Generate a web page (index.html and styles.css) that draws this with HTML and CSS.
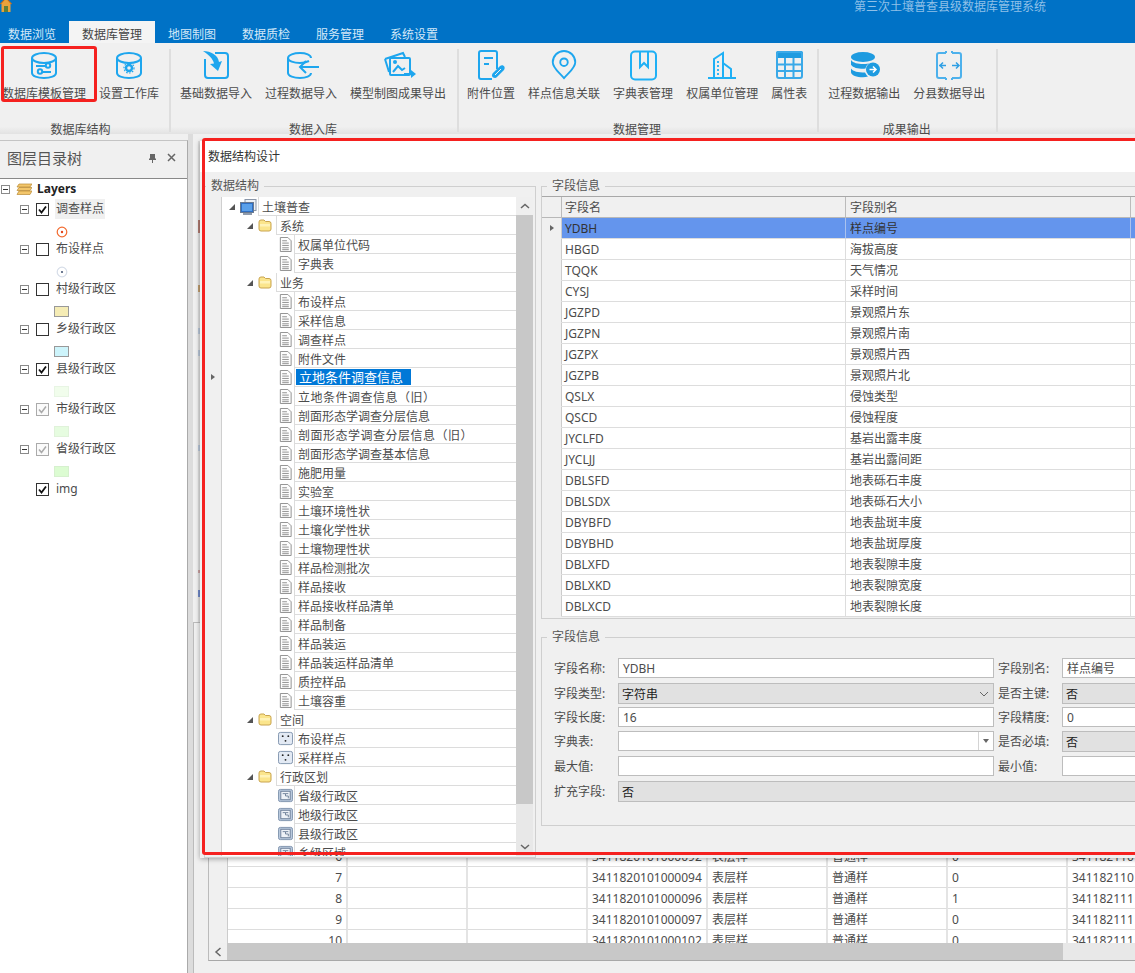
FILE: index.html
```html
<!DOCTYPE html>
<html lang="zh-CN">
<head>
<meta charset="utf-8">
<title>第三次土壤普查县级数据库管理系统</title>
<link rel="stylesheet" href="styles.css">
</head>
<body>
<svg class="defs" width="0" height="0" aria-hidden="true">
  <defs>
    <symbol id="doc" viewBox="0 0 14 16">
      <path d="M1.5.5h8l3.5 3.5v11.500h-11.500z" fill="#fdfdfd" stroke="#8c8c8c"/>
      <path d="M3.500 4h5M3.500 6.500h7M3.500 9h7M3.500 11.500h7M3.500 13.500h7" stroke="#8c8c8c" fill="none"/>
    </symbol>
    <symbol id="folder" viewBox="0 0 14 13">
      <path d="M1 3q0-2 2-2h3l1.500 1.500H11q2 0 2 2V10q0 2-2 2H3q-2 0-2-2z" fill="#fbe58c" stroke="#c9a44e"/>
      <path d="M2 5h10v2.500H2z" fill="#fff3b8"/>
    </symbol>
    <symbol id="exp" viewBox="0 0 6 6"><path d="M6 0v6H0z" fill="#555"/></symbol>
    <symbol id="pt" viewBox="0 0 16 14">
      <rect x=".5" y=".5" width="15" height="13" rx="2" fill="#e3eaf4" stroke="#7f93ad"/>
      <circle cx="5" cy="4.500" r="1" fill="#222"/><circle cx="11" cy="4.500" r="1" fill="#222"/><circle cx="8" cy="9.500" r="1" fill="#222"/>
    </symbol>
    <symbol id="poly" viewBox="0 0 16 14">
      <rect x=".5" y=".5" width="15" height="13" rx="2" fill="#b9c9dd" stroke="#7f93ad"/>
      <rect x="3" y="2.500" width="10" height="9" fill="#eef2f7" stroke="#6d7f98"/>
      <path d="M5 5h3v2.500h3V10M8 5l3 0" fill="none" stroke="#6d7f98"/>
    </symbol>
    <symbol id="check" viewBox="0 0 13 13">
      <rect x=".5" y=".5" width="12" height="12" fill="#fff" stroke="#333"/>
      <path d="M3 6.500l2.500 3L10 3.500" fill="none" stroke="#111" stroke-width="1.800"/>
    </symbol>
    <symbol id="uncheck" viewBox="0 0 13 13"><rect x=".5" y=".5" width="12" height="12" fill="#fff" stroke="#333"/></symbol>
    <symbol id="graycheck" viewBox="0 0 13 13">
      <rect x=".5" y=".5" width="12" height="12" fill="#fafafa" stroke="#aaa"/>
      <path d="M3 6.500l2.500 3L10 3.500" fill="none" stroke="#aaa" stroke-width="1.500"/>
    </symbol>
    <symbol id="minus" viewBox="0 0 9 9">
      <rect x=".5" y=".5" width="8" height="8" fill="#fff" stroke="#8a8a8a"/><path d="M2 4.500h5" stroke="#333"/>
    </symbol>
  </defs>
</svg>

<header class="titlebar">
  <div class="title-row">
    <svg class="home" viewBox="0 0 12 12"><path d="M6-3L0 4h1.500v8h9V4H12z" fill="#e9a23b"/><path d="M-0 4.500L6-2l6 6.500" fill="none" stroke="#a5561c"/><rect x="4" y="6" width="4" height="6" fill="#5b7f3a"/></svg>
    <div class="app-title">第三次土壤普查县级数据库管理系统</div>
  </div>
  <nav class="tabs">
    <span class="tab">数据浏览</span>
    <span class="tab active">数据库管理</span>
    <span class="tab">地图制图</span>
    <span class="tab">数据质检</span>
    <span class="tab">服务管理</span>
    <span class="tab">系统设置</span>
  </nav>
</header>

<section class="ribbon">
  <div class="group group-first">
    <div class="items">
      <div class="item">
        <svg class="ico" viewBox="0 0 30 30"><g class="st"><ellipse cx="15" cy="8" rx="12" ry="5"/><path d="M3 8v15c0 3 5.500 5 12 5s12-2 12-5V8"/><path d="M7 16h15M8 22h14"/><circle cx="19" cy="15.500" r="2.200" fill="#f0f0f0"/><circle cx="11" cy="21.500" r="2.200" fill="#f0f0f0"/></g></svg>
        <span>数据库模板管理</span>
      </div>
      <div class="item">
        <svg class="ico" viewBox="0 0 30 30"><g class="st"><ellipse cx="15" cy="8" rx="12" ry="5"/><path d="M3 8v15c0 3 5.500 5 12 5s12-2 12-5V8"/></g><circle cx="15" cy="18" r="3" fill="none" stroke="#1ea6ee" stroke-width="2.400"/><circle cx="15" cy="18" r="5" fill="none" stroke="#1ea6ee" stroke-width="1.200" stroke-dasharray="1.600 1.400"/></svg>
        <span>设置工作库</span>
      </div>
    </div>
    <div class="group-name">数据库结构</div>
  </div>
  <div class="sep"></div>
  <div class="group group-second">
    <div class="items">
      <div class="item">
        <svg class="ico" viewBox="0 0 30 30"><g class="st"><path d="M14 3h10a3 3 0 0 1 3 3v19a3 3 0 0 1-3 3H7a3 3 0 0 1-3-3V9"/></g><path d="M2 1c8 0 15 4 16 11l3-1-4 10-8-7 4-.500C12 9 8 5 2 1z" fill="#1ea6ee"/></svg>
        <span>基础数据导入</span>
      </div>
      <div class="item">
        <svg class="ico" viewBox="0 0 30 30"><g class="st"><path d="M25 8c0-3-5-5-11-5S2 5 2 8v15c0 3 6 5 12 5s11-2 11-5"/><path d="M2 8c0 3 6 5 12 5 4 0 7-1 9-2"/><path d="M33 17H14m6-6l-6 6 6 6"/></g></svg>
        <span>过程数据导入</span>
      </div>
      <div class="item">
        <svg class="ico" viewBox="0 0 30 30"><g class="st"><path d="M2 9L20 3l2 4"/><path d="M2 9l4 13"/><rect x="7" y="8" width="20" height="17" rx="1"/></g><path d="M10 22l5-6 4 4 3-2" class="st"/><circle cx="12" cy="12" r="2" fill="#1ea6ee"/><path d="M21 23h7v-3l5 4-5 4v-3h-7z" fill="#1ea6ee"/></svg>
        <span>模型制图成果导出</span>
      </div>
    </div>
    <div class="group-name">数据入库</div>
  </div>
  <div class="sep"></div>
  <div class="group group-third">
    <div class="items">
      <div class="item">
        <svg class="ico" viewBox="0 0 30 30"><g class="st"><path d="M21 19V3a2 2 0 0 0-2-2H5a2 2 0 0 0-2 2v24a2 2 0 0 0 2 2h11"/><path d="M8 8h9M8 14h5"/></g><path d="M19 28c-3 0-4-3-2-5l7-7c3-2 6 1 4 4l-7 7c-.600.600-1.300 1-2 1z" fill="#1ea6ee"/><path d="M19 25l6-6" stroke="#f0f0f0" fill="none"/></svg>
        <span>附件位置</span>
      </div>
      <div class="item">
        <svg class="ico" viewBox="0 0 30 32"><g class="st"><path d="M15 30C9 23 3 19 3 13a12 12 0 0 1 24 0c0 6-6 10-12 17z"/><circle cx="15" cy="13" r="4"/></g></svg>
        <span>样点信息关联</span>
      </div>
      <div class="item">
        <svg class="ico" viewBox="0 0 30 30"><g class="st2"><rect x="3" y="1.500" width="25" height="28" rx="4"/><path d="M12 2v15l4-4 4 4V2"/></g></svg>
        <span>字典表管理</span>
      </div>
      <div class="item">
        <svg class="ico" viewBox="0 0 30 30"><g class="st2"><path d="M1 28h28"/><path d="M7 28V9L16 3v25"/><path d="M16 13l8 6v9"/></g><path d="M11 11v2M11 15v2M11 19v2M11 23v2" stroke="#1fb0f5" stroke-width="1.800"/></svg>
        <span>权属单位管理</span>
      </div>
      <div class="item">
        <svg class="ico" viewBox="0 0 30 30"><rect x="2" y="1" width="27" height="7" fill="#1e9be0" rx="2"/><g fill="none" stroke="#3aa9e8" stroke-width="2"><rect x="3" y="2" width="25" height="26" rx="2"/><path d="M3 14.500h25M3 21h25M11 8v20M19.500 8v20"/></g></svg>
        <span>属性表</span>
      </div>
    </div>
    <div class="group-name">数据管理</div>
  </div>
  <div class="sep"></div>
  <div class="group group-fourth">
    <div class="items">
      <div class="item">
        <svg class="ico" viewBox="0 0 30 30"><g fill="#1e9be0"><ellipse cx="14" cy="7" rx="12" ry="5"/><path d="M2 10c2 3 7 4 12 4 3 0 6-.500 8-1.500-3 1-5 3-5.500 6-1 .200-1.800.200-2.500.200-5 0-10-1-12-4zM2 18.500c2 3 7 4 14 4 1 2 2 3 3 4-1.500.500-3.500.800-5 .800-6 0-12-2-12-5z"/><circle cx="24" cy="19.500" r="7"/></g><path d="M20.500 19.500h6m-2.500-3l3 3-3 3" fill="none" stroke="#fff" stroke-width="1.500"/></svg>
        <span>过程数据输出</span>
      </div>
      <div class="item">
        <svg class="ico" viewBox="0 0 30 30"><g fill="none" stroke="#4db1ec" stroke-width="2"><path d="M12 3H5a2 2 0 0 0-2 2v21a2 2 0 0 0 2 2h7M12 1v2M12 28v2"/><path d="M18 3h7a2 2 0 0 1 2 2v21a2 2 0 0 1-2 2h-7M18 1v2M18 28v2"/></g><path d="M5 15.500h7m-3-3l-3 3 3 3M18 15.500h7m-3-3l3 3-3 3" fill="none" stroke="#2f9fe4" stroke-width="1.500"/></svg>
        <span>分县数据导出</span>
      </div>
    </div>
    <div class="group-name">成果输出</div>
  </div>
  <div class="sep"></div>
  <div class="mark-small"></div>
</section>

<main class="main">
  <aside class="layers">
    <div class="layers-head">
      <span class="layers-title">图层目录树</span>
      <svg class="pin" viewBox="0 0 9 10"><path d="M2 1h5v4l1 1v1H5v3H4V7H1V6l1-1z" fill="#666"/></svg>
      <svg class="close" viewBox="0 0 9 9"><path d="M1 1l7 7M8 1L1 8" stroke="#666" stroke-width="1.500"/></svg>
    </div>
    <div class="layers-body">
      <div class="lyr lyr-root">
        <svg class="mn"><use href="#minus"/></svg>
        <svg class="stack" viewBox="0 0 16 13"><path d="M3 1h13l-2 3H1zM3 4.500h13l-2 3H1zM3 8h13l-2 3.500H1z" fill="#f3c66b" stroke="#b98a35" stroke-width=".7"/></svg>
        <b>Layers</b>
      </div>
      <div class="lyr"><svg class="mn"><use href="#minus"/></svg><svg class="cb"><use href="#check"/></svg><span class="lbl lbl-on">调查样点</span></div>
      <div class="sym"><svg class="dot" viewBox="0 0 12 12"><circle cx="6" cy="6" r="4.800" fill="none" stroke="#f26a2e" stroke-width="1.200"/><circle cx="6" cy="6" r="1.200" fill="#e2451c"/></svg></div>
      <div class="lyr"><svg class="mn"><use href="#minus"/></svg><svg class="cb"><use href="#uncheck"/></svg><span class="lbl">布设样点</span></div>
      <div class="sym"><svg class="dot" viewBox="0 0 12 12"><circle cx="6" cy="6" r="4.800" fill="none" stroke="#d6dde8" stroke-width="1.200"/><circle cx="6" cy="6" r="1.100" fill="#4a5a78"/></svg></div>
      <div class="lyr"><svg class="mn"><use href="#minus"/></svg><svg class="cb"><use href="#uncheck"/></svg><span class="lbl">村级行政区</span></div>
      <div class="sym"><i class="sw sw-a"></i></div>
      <div class="lyr"><svg class="mn"><use href="#minus"/></svg><svg class="cb"><use href="#uncheck"/></svg><span class="lbl">乡级行政区</span></div>
      <div class="sym"><i class="sw sw-b"></i></div>
      <div class="lyr"><svg class="mn"><use href="#minus"/></svg><svg class="cb"><use href="#check"/></svg><span class="lbl">县级行政区</span></div>
      <div class="sym"><i class="sw sw-c"></i></div>
      <div class="lyr"><svg class="mn"><use href="#minus"/></svg><svg class="cb"><use href="#graycheck"/></svg><span class="lbl">市级行政区</span></div>
      <div class="sym"><i class="sw sw-d"></i></div>
      <div class="lyr"><svg class="mn"><use href="#minus"/></svg><svg class="cb"><use href="#graycheck"/></svg><span class="lbl">省级行政区</span></div>
      <div class="sym"><i class="sw sw-e"></i></div>
      <div class="lyr lyr-img"><svg class="cb"><use href="#check"/></svg><span class="lbl">img</span></div>
    </div>
  </aside>
  <div class="splitter"></div>
  <div class="workspace">
    <div class="doc-ticks"></div>
    <div class="doc">
      <div class="bg-frame">
        <div class="bg-clip">
          <table class="bg-table">
            <tr><th></th><td class="num">6</td><td></td><td></td><td>3411820101000092</td><td>表层样</td><td>普通样</td><td>0</td><td>341182110</td></tr>
            <tr><th></th><td class="num">7</td><td></td><td></td><td>3411820101000094</td><td>表层样</td><td>普通样</td><td>0</td><td>341182110</td></tr>
            <tr><th></th><td class="num">8</td><td></td><td></td><td>3411820101000096</td><td>表层样</td><td>普通样</td><td>1</td><td>341182111</td></tr>
            <tr><th></th><td class="num">9</td><td></td><td></td><td>3411820101000097</td><td>表层样</td><td>普通样</td><td>0</td><td>341182111</td></tr>
            <tr><th></th><td class="num">10</td><td></td><td></td><td>3411820101000102</td><td>表层样</td><td>普通样</td><td>0</td><td>341182111</td></tr>
          </table>
        </div>
        <div class="hscroll">
          <div class="hbtn"><svg viewBox="0 0 8 10" width="8" height="10"><path d="M6.500 1L2 5l4.500 4" fill="none" stroke="#666" stroke-width="1.500"/></svg></div>
          <div class="hthumb"></div>
          <div class="hrest"></div>
        </div>
      </div>
    </div>
  </div>
</main>

<div class="dialog">
  <div class="dialog-title">数据结构设计</div>
  <div class="dialog-body">
    <fieldset class="fs fs-tree">
      <legend>数据结构</legend>
      <div class="tree-wrap">
        <div class="gutter"><i class="tri"></i></div>
        <div class="tree">
          <div class="tr l1"><svg class="ex"><use href="#exp"/></svg><svg class="root-ic" viewBox="0 0 17 16"><rect x="5" y=".5" width="11" height="11" fill="#eef1f6" stroke="#8a96a8"/><rect x=".5" y="3.500" width="13" height="10" fill="#2f6fc4" stroke="#6a7a90"/><rect x="2" y="5" width="10" height="7" fill="#5aa0ea"/><path d="M3 15h9" stroke="#6a7a90" stroke-width="1.500"/></svg><span class="tl">土壤普查</span></div>
          <div class="tr l2"><svg class="ex"><use href="#exp"/></svg><svg class="fo"><use href="#folder"/></svg><span class="tl">系统</span></div>
          <div class="tr l3"><svg class="ti"><use href="#doc"/></svg><span class="tl">权属单位代码</span></div>
          <div class="tr l3"><svg class="ti"><use href="#doc"/></svg><span class="tl">字典表</span></div>
          <div class="tr l2"><svg class="ex"><use href="#exp"/></svg><svg class="fo"><use href="#folder"/></svg><span class="tl">业务</span></div>
          <div class="tr l3"><svg class="ti"><use href="#doc"/></svg><span class="tl">布设样点</span></div>
          <div class="tr l3"><svg class="ti"><use href="#doc"/></svg><span class="tl">采样信息</span></div>
          <div class="tr l3"><svg class="ti"><use href="#doc"/></svg><span class="tl">调查样点</span></div>
          <div class="tr l3"><svg class="ti"><use href="#doc"/></svg><span class="tl">附件文件</span></div>
          <div class="tr l3"><svg class="ti"><use href="#doc"/></svg><span class="tl tl-sel"><span class="sel">立地条件调查信息</span></span></div>
          <div class="tr l3"><svg class="ti"><use href="#doc"/></svg><span class="tl tl-wide">立地条件调查信息（旧）</span></div>
          <div class="tr l3"><svg class="ti"><use href="#doc"/></svg><span class="tl">剖面形态学调查分层信息</span></div>
          <div class="tr l3"><svg class="ti"><use href="#doc"/></svg><span class="tl tl-wide">剖面形态学调查分层信息（旧）</span></div>
          <div class="tr l3"><svg class="ti"><use href="#doc"/></svg><span class="tl">剖面形态学调查基本信息</span></div>
          <div class="tr l3"><svg class="ti"><use href="#doc"/></svg><span class="tl">施肥用量</span></div>
          <div class="tr l3"><svg class="ti"><use href="#doc"/></svg><span class="tl">实验室</span></div>
          <div class="tr l3"><svg class="ti"><use href="#doc"/></svg><span class="tl">土壤环境性状</span></div>
          <div class="tr l3"><svg class="ti"><use href="#doc"/></svg><span class="tl">土壤化学性状</span></div>
          <div class="tr l3"><svg class="ti"><use href="#doc"/></svg><span class="tl">土壤物理性状</span></div>
          <div class="tr l3"><svg class="ti"><use href="#doc"/></svg><span class="tl">样品检测批次</span></div>
          <div class="tr l3"><svg class="ti"><use href="#doc"/></svg><span class="tl">样品接收</span></div>
          <div class="tr l3"><svg class="ti"><use href="#doc"/></svg><span class="tl">样品接收样品清单</span></div>
          <div class="tr l3"><svg class="ti"><use href="#doc"/></svg><span class="tl">样品制备</span></div>
          <div class="tr l3"><svg class="ti"><use href="#doc"/></svg><span class="tl">样品装运</span></div>
          <div class="tr l3"><svg class="ti"><use href="#doc"/></svg><span class="tl">样品装运样品清单</span></div>
          <div class="tr l3"><svg class="ti"><use href="#doc"/></svg><span class="tl">质控样品</span></div>
          <div class="tr l3"><svg class="ti"><use href="#doc"/></svg><span class="tl">土壤容重</span></div>
          <div class="tr l2"><svg class="ex"><use href="#exp"/></svg><svg class="fo"><use href="#folder"/></svg><span class="tl">空间</span></div>
          <div class="tr l3"><svg class="ti"><use href="#pt"/></svg><span class="tl">布设样点</span></div>
          <div class="tr l3"><svg class="ti"><use href="#pt"/></svg><span class="tl">采样样点</span></div>
          <div class="tr l2"><svg class="ex"><use href="#exp"/></svg><svg class="fo"><use href="#folder"/></svg><span class="tl">行政区划</span></div>
          <div class="tr l3"><svg class="ti"><use href="#poly"/></svg><span class="tl">省级行政区</span></div>
          <div class="tr l3"><svg class="ti"><use href="#poly"/></svg><span class="tl">地级行政区</span></div>
          <div class="tr l3"><svg class="ti"><use href="#poly"/></svg><span class="tl">县级行政区</span></div>
          <div class="tr l3"><svg class="ti"><use href="#poly"/></svg><span class="tl">乡级区域</span></div>
        </div>
        <div class="vscroll">
          <div class="vbtn"><svg viewBox="0 0 10 6" width="10" height="6"><path d="M1 5l4-3.500L9 5" fill="none" stroke="#666" stroke-width="1.500"/></svg></div>
          <div class="vthumb"></div>
          <div class="vrest"><svg viewBox="0 0 10 6" width="10" height="6"><path d="M1 1l4 3.500L9 1" fill="none" stroke="#666" stroke-width="1.500"/></svg></div>
        </div>
      </div>
    </fieldset>
    <div class="right-col">
      <fieldset class="fs fs-grid">
        <legend>字段信息</legend>
        <div class="grid-clip">
          <table class="grid">
            <tr class="head"><th></th><th>字段名</th><th>字段别名</th><th></th></tr>
            <tr class="cur"><th><i class="tri"></i></th><td>YDBH</td><td>样点编号</td><td></td></tr>
            <tr><th></th><td>HBGD</td><td>海拔高度</td><td></td></tr>
            <tr><th></th><td>TQQK</td><td>天气情况</td><td></td></tr>
            <tr><th></th><td>CYSJ</td><td>采样时间</td><td></td></tr>
            <tr><th></th><td>JGZPD</td><td>景观照片东</td><td></td></tr>
            <tr><th></th><td>JGZPN</td><td>景观照片南</td><td></td></tr>
            <tr><th></th><td>JGZPX</td><td>景观照片西</td><td></td></tr>
            <tr><th></th><td>JGZPB</td><td>景观照片北</td><td></td></tr>
            <tr><th></th><td>QSLX</td><td>侵蚀类型</td><td></td></tr>
            <tr><th></th><td>QSCD</td><td>侵蚀程度</td><td></td></tr>
            <tr><th></th><td>JYCLFD</td><td>基岩出露丰度</td><td></td></tr>
            <tr><th></th><td>JYCLJJ</td><td>基岩出露间距</td><td></td></tr>
            <tr><th></th><td>DBLSFD</td><td>地表砾石丰度</td><td></td></tr>
            <tr><th></th><td>DBLSDX</td><td>地表砾石大小</td><td></td></tr>
            <tr><th></th><td>DBYBFD</td><td>地表盐斑丰度</td><td></td></tr>
            <tr><th></th><td>DBYBHD</td><td>地表盐斑厚度</td><td></td></tr>
            <tr><th></th><td>DBLXFD</td><td>地表裂隙丰度</td><td></td></tr>
            <tr><th></th><td>DBLXKD</td><td>地表裂隙宽度</td><td></td></tr>
            <tr><th></th><td>DBLXCD</td><td>地表裂隙长度</td><td></td></tr>
          </table>
        </div>
      </fieldset>
      <fieldset class="fs fs-form">
        <legend>字段信息</legend>
        <div class="form">
          <label>字段名称:</label><div class="field">YDBH</div><label class="lab-r">字段别名:</label><div class="field">样点编号</div>
          <label>字段类型:</label><div class="field field-off dark field-select">字符串<svg viewBox="0 0 10 6" width="10" height="6"><path d="M1 1l4 4 4-4" fill="none" stroke="#666"/></svg></div><label class="lab-r">是否主键:</label><div class="field field-off dark">否</div>
          <label>字段长度:</label><div class="field">16</div><label class="lab-r">字段精度:</label><div class="field">0</div>
          <label>字典表:</label><div class="field field-combo"><span class="combo-btn"><i class="caret"></i></span></div><label class="lab-r">是否必填:</label><div class="field field-off dark">否</div>
          <label>最大值:</label><div class="field"></div><label class="lab-r">最小值:</label><div class="field"></div>
          <label>扩充字段:</label><div class="field field-off dark span3">否</div>
        </div>
      </fieldset>
    </div>
  </div>
</div>
<div class="mark-big"></div>
</body>
</html>
```

FILE: styles.css
```css
* { box-sizing: border-box; }
html, body { margin: 0; padding: 0; width: 1135px; height: 973px; overflow: hidden; }
body {
  position: relative;
  display: flex;
  flex-direction: column;
  background: #f0f0f0;
  color: #4c4c4c;
  font: 12px/14px "Noto Sans", "Noto Sans CJK SC", sans-serif;
}
.defs { position: absolute; }

/* title bar */
.titlebar { height: 43px; background: #0072c6; flex: none; }
.title-row { height: 21px; display: flex; justify-content: space-between; overflow: hidden; }
.home { width: 12px; height: 12px; }
.app-title { margin-right: 89px; line-height: 13px; color: #8fc0e8; }
.tabs { display: flex; height: 22px; margin-left: -5px; }
.tab { padding: 7px 13px 0; color: #d3e8f8; }
.tab.active { background: #f4f4f4; color: #444; }

/* ribbon */
.ribbon {
  position: relative;
  display: flex;
  height: 91px;
  flex: none;
  background: linear-gradient(#f0f0f0 92%, #e2e2e2);
}
.group { padding: 7px 11px 0 8px; }
.group-first { padding: 7px 10px 0 2px; }
.group-second { padding-left: 9px; }
.group-third { padding: 7px 10px 0 8px; }
.group-fourth { padding-left: 9px; }
.items { display: flex; gap: 13px; }
.item { display: flex; flex-direction: column; align-items: center; gap: 7px; white-space: nowrap; }
.ico { width: 30px; height: 30px; overflow: visible; display: block; }
.st { fill: none; stroke: #1ea6ee; stroke-width: 2; }
.st2 { fill: none; stroke: #1fb0f5; stroke-width: 2; }
.group-name { margin-top: 22px; text-align: center; }
.sep { width: 2px; height: 83px; margin-top: 6px; background: #dedede; }
.mark-small {
  position: absolute; left: 1px; top: 3px; width: 96px; height: 56px;
  border: 3px solid #f5211f; border-radius: 3px;
}

/* main */
.main { flex: 1; display: flex; min-height: 0; }
.layers {
  width: 188px; margin-top: 6px;
  display: flex; flex-direction: column;
  border-top: 1px solid #c4c4c4; border-right: 1px solid #aaa;
}
.layers-head {
  height: 38px; display: flex; align-items: center; padding: 0 0 4px 7px;
  border-bottom: 1px solid #888; flex: none;
}
.layers-title { font-size: 15px; flex: 1; color: #555; }
.pin { width: 9px; height: 10px; margin-right: 10px; }
.close { width: 9px; height: 9px; margin-right: 11px; }
.layers-body { flex: 1; background: #fff; }
.lyr { height: 20px; display: flex; align-items: center; padding-left: 20px; }
.lyr-root { padding-left: 1px; color: #222; }
.lyr-root b { margin-left: 5px; }
.lyr-img { padding-left: 36px; }
.mn { width: 9px; height: 9px; flex: none; }
.stack { width: 16px; height: 13px; margin-left: 6px; }
.cb { width: 13px; height: 13px; margin-left: 7px; flex: none; }
.lyr-img .cb { margin-left: 0; }
.lbl { margin-left: 6px; padding: 2px 1px; }
.lbl-on { background: #f0f0f0; padding: 3px 1px; }
.sym { height: 20px; padding: 7px 0 0 54px; }
.dot { width: 12px; height: 12px; display: block; margin: 0 0 0 2px; }
.sw { display: block; width: 15px; height: 11px; border: 1px solid #999; }
.sw-a { background: #f5ecb5; }
.sw-b { background: #cdf4fb; }
.sw-c { background: #f1fdec; border-color: #e8f5e4; }
.sw-d { background: #e6fce0; border-color: #e0f2da; }
.sw-e { background: #dcfcd2; border-color: #d6f0ce; }
.splitter { width: 5px; background: #dcdcdc; }
.workspace { flex: 1; min-width: 0; display: flex; flex-direction: column; }
.doc-ticks {
  flex: none; width: 3px; height: 481px; margin: 7px 0 0 5px;
  background:
    linear-gradient(#fff0 0, #fff0 79px, #b07a70 79px, #b07a70 92px, #fff0 92px, #fff0 144px, #bf9d6f 144px, #bf9d6f 151px, #fff0 151px, #fff0 187px, #b8c6d8 187px, #b8c6d8 193px, #fff0 193px, #fff0 209px, #b8c6d8 209px, #b8c6d8 215px, #fff0 215px, #fff0 304px, #b8c6d8 304px, #b8c6d8 310px, #fff0 310px, #fff0 429px, #c9a0a0 429px, #c9a0a0 432px, #fff0 432px, #fff0 449px, #7089c8 449px, #7089c8 456px, #fff0 456px), #dedede;
}
.doc {
  margin-top: auto; height: 351px;
  border-left: 1px solid #bbb; border-top: 1px solid #bbb;
  padding: 0 0 12px 14px;
  display: flex; flex-direction: column; justify-content: flex-end;
}
.bg-frame { border-left: 1px solid #bbb; border-bottom: 1px solid #a8a8a8; background: #fff; width: 1000px; }
.bg-clip { height: 97px; overflow: hidden; }
.bg-table { border-collapse: separate; border-spacing: 0; table-layout: fixed; width: 979px; }
.bg-table th { width: 19px; background: #f0f0f0; border-right: 1px solid #ccc; padding: 0; }
.bg-table td {
  width: 120px; height: 21px; padding: 2px 0 0 4px;
  border-right: 2px solid #e4e4e4; border-bottom: 1px solid #ddd; white-space: nowrap; overflow: hidden;
}
.bg-table td.num { text-align: right; padding: 2px 4px 0 0; }
.hscroll { display: flex; height: 17px; }
.hbtn { width: 18px; background: #efefef; display: flex; align-items: center; justify-content: center; }
.hthumb { width: 836px; background: #c8c8c8; }
.hrest { flex: 1; background: #e8e8e8; }

/* dialog window */
.dialog {
  position: absolute; left: 200px; top: 141px; width: 1000px; height: 717px;
  background: #f0f0f0; box-shadow: 0 1px 5px rgba(0,0,0,.35);
}
.dialog-title { height: 31px; background: #fff; padding: 9px 0 0 8px; color: #333; }
.dialog-body { display: flex; gap: 5px; padding: 7px 0 0 4px; }
.fs { margin: 0; padding: 0; min-width: 0; border: 1px solid #cfcfcf; }
.fs legend { margin-left: 5px; padding: 0 5px; line-height: 14px; color: #555; }
.fs-tree legend { margin-left: 1px; }
.fs-tree { width: 332px; height: 679px; padding-top: 4px; flex: none; }
.tree-wrap { display: flex; height: 659px; }
.gutter { width: 17px; border-right: 1px solid #cfcfcf; flex: none; padding: 177px 0 0 6px; }
.tri { display: block; width: 0; height: 0; border: 3.500px solid transparent; border-left: 4px solid #666; border-right: 0; }
.tree { width: 294px; background: #fff; overflow: hidden; flex: none; }
.tr { display: flex; height: 19px; align-items: center; }
.tl { flex: 1; align-self: stretch; border-left: 1px solid #dcdcdc; border-bottom: 1px solid #dcdcdc; padding: 3px 0 0 3px; line-height: 16px; white-space: nowrap; margin-top: 0; }
.tl-wide { letter-spacing: .5px; }
.tl-sel { padding: 1px 0 0 1px; }
.sel { display: inline-block; height: 16px; background: #0078d7; color: #fff; font-size: 13px; line-height: 16px; padding: 0 8px 0 3px; width: 115px; white-space: nowrap; }
.l1 { padding-left: 7px; }
.l2 { padding-left: 25px; }
.l3 { padding-left: 56px; }
.ex { width: 6px; height: 6px; flex: none; }
.root-ic { width: 17px; height: 16px; margin: 0 1px 0 5px; flex: none; }
.fo { width: 14px; height: 13px; margin: 0 4px 0 5px; flex: none; }
.ti { width: 15px; height: 15px; margin-right: 1px; flex: none; }
.vscroll { width: 17px; flex: none; display: flex; flex-direction: column; background: #e8e8e8; }
.vbtn { height: 18px; display: flex; align-items: center; justify-content: center; background: #efefef; flex: none; }
.vthumb { height: 589px; background: #c8c8c8; flex: none; }
.vrest { flex: 1; display: flex; align-items: flex-end; justify-content: center; padding-bottom: 6px; }

.right-col { width: 650px; flex: none; display: flex; flex-direction: column; gap: 11px; }
.fs-grid { height: 440px; padding-top: 3px; }
.grid-clip { height: 421px; overflow: hidden; background: #fff; }
.grid { border-collapse: separate; border-spacing: 0; table-layout: fixed; width: 650px; border-top: 1px solid #a8a8a8; }
.grid th, .grid td { height: 21px; padding: 2px 0 0 3px; font-weight: 400; text-align: left; border-right: 1px solid #ddd; border-bottom: 1px solid #ddd; white-space: nowrap; }
.grid th:first-child { width: 20px; background: #f0f0f0; border-right-color: #ccc; border-bottom-color: #f0f0f0; padding: 0 0 0 8px; }
.grid td:nth-child(2), .grid .head th:nth-child(2) { width: 284px; }
.grid td:nth-child(3), .grid .head th:nth-child(3) { width: 285px; padding-left: 4px; }
.grid .head th { background: #f0f0f0; border-right-color: #bbb; border-bottom-color: #b8b8b8; }
.grid .cur td { background: #6495ed; border-right-color: #aac2ee; color: #333; }
.fs-form { height: 196px; padding: 14px 0 0 0; }
.form {
  display: grid;
  margin-left: 12px;
  grid-template-columns: 64px 376px 68px 130px;
  grid-template-rows: 21px 20px 20px 21px 21px 21px;
  row-gap: 4px;
}
.form label { line-height: 21px; white-space: nowrap; }
.form .lab-r { padding-left: 4px; }
.field { height: 20px; background: #fff; border: 1px solid #bdbdbd; padding: 1px 4px 0; line-height: 18px; white-space: nowrap; position: relative; }
.field-off { background: #e1e1e1; height: 21px; line-height: 19px; padding-left: 3px; }
.dark { color: #222; }
.span3 { grid-column: span 3; }
.field-select { display: flex; justify-content: space-between; align-items: center; padding-right: 4px; }
.field-combo { display: flex; justify-content: flex-end; padding: 0; }
.combo-btn { width: 15px; border-left: 1px solid #d4d4d4; display: flex; align-items: center; justify-content: center; }
.caret { display: block; width: 0; height: 0; border: 3px solid transparent; border-top: 4px solid #666; border-bottom: 0; }

.mark-big {
  position: absolute; left: 202px; top: 138px; width: 1000px; height: 717px;
  border: 3px solid #f5211f; border-radius: 3px;
}
```
